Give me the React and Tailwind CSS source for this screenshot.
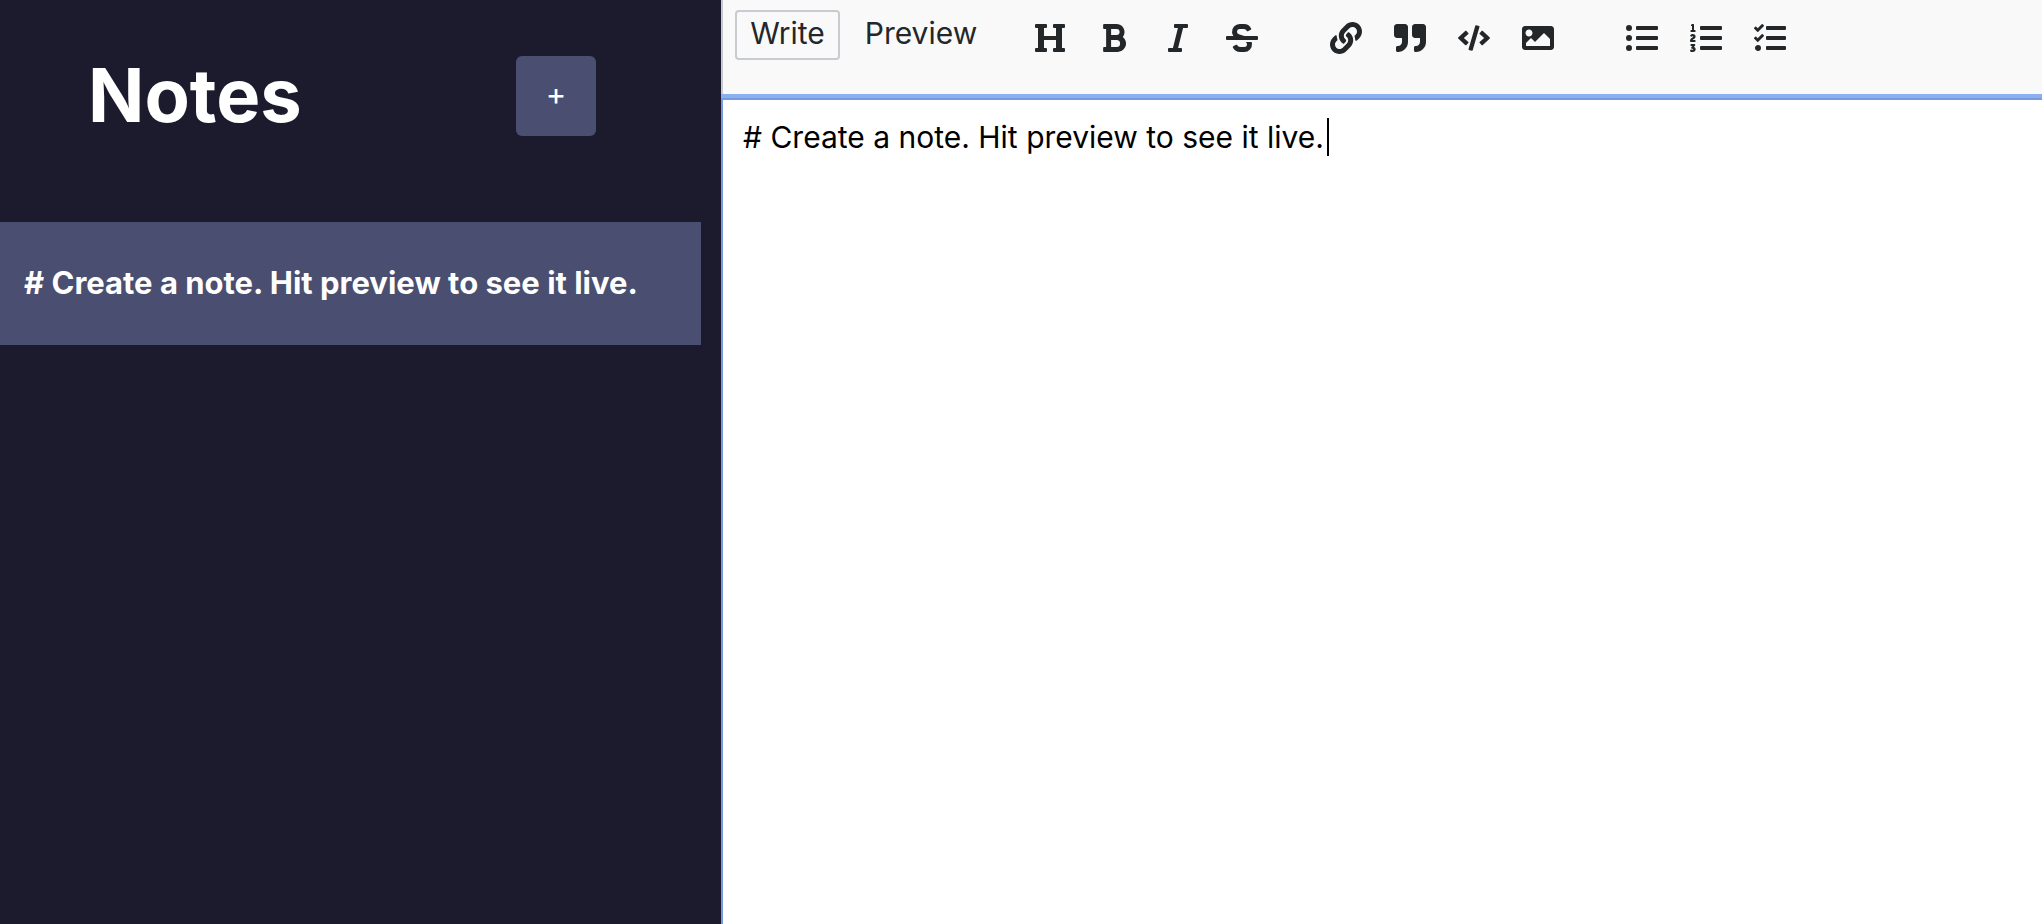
import { useState } from "react";
import {
  FaHeading,
  FaBold,
  FaItalic,
  FaStrikethrough,
  FaLink,
  FaQuoteRight,
  FaCode,
  FaImage,
  FaListUl,
  FaListOl,
  FaTasks,
} from "react-icons/fa";

const groups = [
  [
    ["Add header", FaHeading],
    ["Add bold text", FaBold],
    ["Add italic text", FaItalic],
    ["Add strikethrough text", FaStrikethrough],
  ],
  [
    ["Add a link", FaLink],
    ["Insert a quote", FaQuoteRight],
    ["Insert code", FaCode],
    ["Add image", FaImage],
  ],
  [
    ["Add unordered list", FaListUl],
    ["Add ordered list", FaListOl],
    ["Add checked list", FaTasks],
  ],
];

function Sidebar({ note }) {
  return (
    <aside className="w-[721px] shrink bg-[#1c1b2d] pr-5 text-white">
      <header className="flex h-[222px] items-start justify-between pt-14 pr-[105px] pl-[88px]">
        <h1 className="text-[74px] leading-[78px] font-bold">Notes</h1>
        <button
          type="button"
          aria-label="New note"
          className="size-20 rounded-md bg-[#4a4e70] pb-1 text-[31px]"
        >
          +
        </button>
      </header>
      <button
        type="button"
        className="flex h-[123px] w-full items-center bg-[#4a4e70] px-6 text-left text-[31px] font-bold"
      >
        <span className="truncate">{note}</span>
      </button>
    </aside>
  );
}

function Toolbar() {
  return (
    <div className="flex h-[94px] items-start border-l-2 border-[#c8ccd0] bg-[#f9f9f9] text-[#242729]">
      <div className="flex pt-[10px] pl-3 text-[30px]">
        <button
          type="button"
          className="h-[50px] w-[105px] rounded-sm border-2 border-[#c8ccd0] pb-1 leading-[42px]"
        >
          Write
        </button>
        <button type="button" className="h-[50px] w-[162px] pb-1 leading-[42px]">
          Preview
        </button>
      </div>
      <div className="flex gap-[72px] pt-[22px] pl-8">
        {groups.map((group, i) => (
          <div key={i} className="flex gap-8">
            {group.map(([label, Icon]) => (
              <button key={label} type="button" aria-label={label}>
                <Icon className="size-8" />
              </button>
            ))}
          </div>
        ))}
      </div>
    </div>
  );
}

export default function App() {
  const [note, setNote] = useState("# Create a note. Hit preview to see it live.");
  const [edited, setEdited] = useState(false);
  return (
    <div className="flex min-h-screen font-['Inter',sans-serif]">
      <Sidebar note={note} />
      <main className="flex min-w-0 flex-1 flex-col bg-white">
        <Toolbar />
        <div className="h-1 bg-[#8bb0f0]" />
        <div className="relative flex flex-1">
          <textarea
            aria-label="Note text"
            value={note}
            onFocus={() => setEdited(true)}
            onChange={(e) => setNote(e.target.value)}
            className="w-full flex-1 resize-none border-t-2 border-l-2 border-[#769bdf] px-5 pt-4 text-[30px] leading-[42px] text-black outline-none"
          />
          {!edited && (
            <span
              aria-hidden="true"
              className="absolute top-5 left-[606px] h-[38px] w-0.5 bg-black"
            />
          )}
        </div>
      </main>
    </div>
  );
}
